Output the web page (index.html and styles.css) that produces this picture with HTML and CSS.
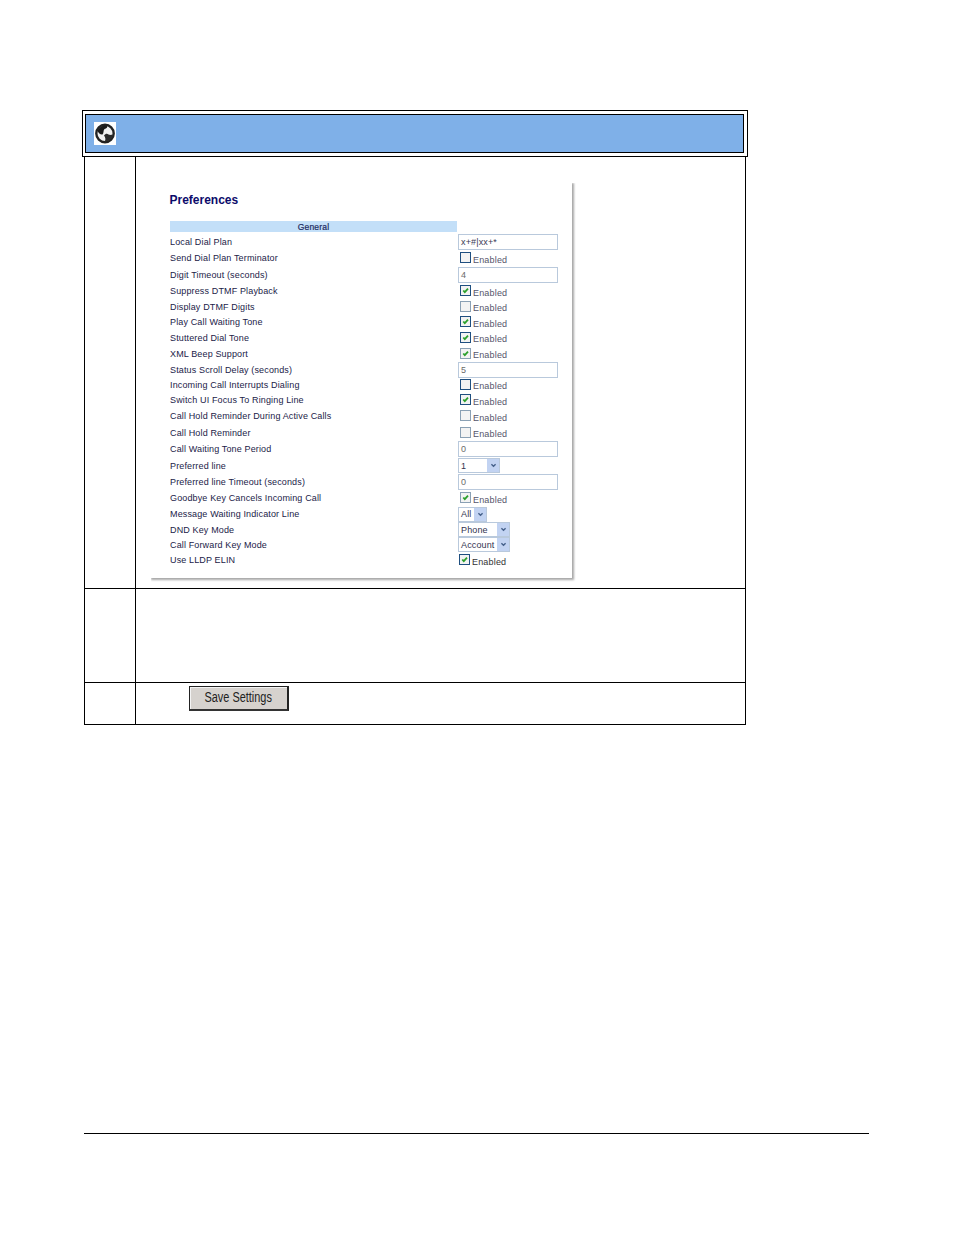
FILE: index.html
```html
<!DOCTYPE html>
<html lang="en">
<head>
<meta charset="utf-8">
<title>Preferences</title>
<link rel="stylesheet" href="styles.css">
</head>
<body>
<div class="page">
  <header class="banner">
    <div class="banner-inner">
      <svg class="globe" viewBox="0 0 22 23" aria-hidden="true">
        <rect width="22" height="23" fill="#fff"/>
        <circle cx="11" cy="11.5" r="8.7" fill="#f0f0f0" stroke="#222" stroke-width="2.4"/>
        <path d="M3.5 9 C5 5 9 3 13 3.5 C14 5 12.5 6.5 10.5 7 C9 8.5 10 11 8.5 12.5 C6.5 13 4.5 11 3.5 9 Z" fill="#1a1a1a"/>
        <path d="M10 13.5 C11.5 11.5 13 11 14.5 12.5 C16 13.5 18 12.5 19 13 C18 17 14 20 10.5 19.5 C12 18 11.5 15.5 10 13.5 Z" fill="#2a2a2a"/>
      </svg>
    </div>
  </header>

  <div class="steps">
    <div class="num r1"></div>
    <div class="body r1">
      <section class="panel">
        <h1 class="title">Preferences</h1>
        <div class="band">General</div>
        <div class="rows">
          <div class="row h17"><span>Local Dial Plan</span><div class="field dark">x+#|xx+*</div></div>
          <div class="row h16"><span>Send Dial Plan Terminator</span><label class="check"><i class="box"></i>Enabled</label></div>
          <div class="row h17"><span>Digit Timeout (seconds)</span><div class="field">4</div></div>
          <div class="row h16"><span>Suppress DTMF Playback</span><label class="check"><i class="box on"><svg viewBox="0 0 10 10"><path d="M2.5 5 L4.2 6.8 L7.8 3" /></svg></i>Enabled</label></div>
          <div class="row h15"><span>Display DTMF Digits</span><label class="check"><i class="box soft"></i>Enabled</label></div>
          <div class="row h16"><span>Play Call Waiting Tone</span><label class="check"><i class="box on"><svg viewBox="0 0 10 10"><path d="M2.5 5 L4.2 6.8 L7.8 3" /></svg></i>Enabled</label></div>
          <div class="row h15"><span>Stuttered Dial Tone</span><label class="check"><i class="box on"><svg viewBox="0 0 10 10"><path d="M2.5 5 L4.2 6.8 L7.8 3" /></svg></i>Enabled</label></div>
          <div class="row h17"><span>XML Beep Support</span><label class="check"><i class="box on soft"><svg viewBox="0 0 10 10"><path d="M2.5 5 L4.2 6.8 L7.8 3" /></svg></i>Enabled</label></div>
          <div class="row h15"><span>Status Scroll Delay (seconds)</span><div class="field">5</div></div>
          <div class="row h15"><span>Incoming Call Interrupts Dialing</span><label class="check"><i class="box"></i>Enabled</label></div>
          <div class="row h16"><span>Switch UI Focus To Ringing Line</span><label class="check"><i class="box on"><svg viewBox="0 0 10 10"><path d="M2.5 5 L4.2 6.8 L7.8 3" /></svg></i>Enabled</label></div>
          <div class="row h16"><span>Call Hold Reminder During Active Calls</span><label class="check"><i class="box soft"></i>Enabled</label></div>
          <div class="row h17"><span>Call Hold Reminder</span><label class="check"><i class="box soft"></i>Enabled</label></div>
          <div class="row h16"><span>Call Waiting Tone Period</span><div class="field">0</div></div>
          <div class="row h17"><span>Preferred line</span><div class="select w42"><b>1</b><i class="arrow"><svg viewBox="0 0 8 6"><path d="M1.5 1.5 L4 4 L6.5 1.5"/></svg></i></div></div>
          <div class="row h16"><span>Preferred line Timeout (seconds)</span><div class="field">0</div></div>
          <div class="row h16"><span>Goodbye Key Cancels Incoming Call</span><label class="check"><i class="box on soft"><svg viewBox="0 0 10 10"><path d="M2.5 5 L4.2 6.8 L7.8 3" /></svg></i>Enabled</label></div>
          <div class="row h16"><span>Message Waiting Indicator Line</span><div class="select w29"><b>All</b><i class="arrow"><svg viewBox="0 0 8 6"><path d="M1.5 1.5 L4 4 L6.5 1.5"/></svg></i></div></div>
          <div class="row h15"><span>DND Key Mode</span><div class="select w52"><b>Phone</b><i class="arrow"><svg viewBox="0 0 8 6"><path d="M1.5 1.5 L4 4 L6.5 1.5"/></svg></i></div></div>
          <div class="row h15"><span>Call Forward Key Mode</span><div class="select w52"><b>Account</b><i class="arrow"><svg viewBox="0 0 8 6"><path d="M1.5 1.5 L4 4 L6.5 1.5"/></svg></i></div></div>
          <div class="row h16"><span>Use LLDP ELIN</span><label class="check last"><i class="box on"><svg viewBox="0 0 10 10"><path d="M2.5 5 L4.2 6.8 L7.8 3" /></svg></i>Enabled</label></div>
        </div>
      </section>
    </div>
    <div class="num r2"></div>
    <div class="body r2"></div>
    <div class="num r3"></div>
    <div class="body r3"><button class="save" type="button"><span>Save Settings</span></button></div>
  </div>

  <div class="spacer"></div>
  <hr class="rule">
</div>
</body>
</html>
```

FILE: styles.css
```css
* { box-sizing: border-box; }
html, body { margin: 0; padding: 0; background: #fff; }
body { font-family: "Liberation Sans", Arial, sans-serif; }
.page { width: 954px; height: 1235px; padding: 110px 0 0 82px; display: flex; flex-direction: column; }

.banner { width: 666px; height: 47px; border: 1px solid #000; padding: 3px 3px 3px 2px; }
.banner-inner { height: 39px; background: #7fb0e8; border: 1px solid #000; padding: 7px 0 0 8px; }
.globe { display: block; width: 22px; height: 23px; }

.steps { margin-left: 2px; width: 662px; display: grid; grid-template-columns: 51px 609px; grid-template-rows: 432px 94px 41px; border-left: 1px solid #000; border-bottom: 1px solid #000; border-right: 1px solid #000; }
.num { border-right: 1px solid #000; border-bottom: 1px solid #000; }
.body { border-bottom: 1px solid #000; }
.num.r3, .body.r3 { border-bottom: 0; }

.panel { width: 421px; height: 395px; margin: 26px 0 0 15px; padding: 10px 0 0 18.5px; background: #fff; box-shadow: 1px 1px 2px 1px #a8a8a8; clip-path: inset(0 -4px -4px 0); color: #1b1b48; }
.title { margin: 0; height: 14px; line-height: 14px; font-size: 12px; font-weight: bold; color: #0b0b6a; }
.band { margin: 14px 0 0 .5px; width: 287px; height: 11px; line-height: 12px; background: #c3dff8; text-align: center; font-size: 8.5px; color: #1c2a60; -webkit-text-stroke: 0.2px #1c2a60; letter-spacing: .2px; }
.rows { display: flex; flex-direction: column; margin: 1px 0 0 .5px; }
.row { display: grid; grid-template-columns: 288px auto; align-items: center; font-size: 9px; letter-spacing: .14px; white-space: nowrap; }
.h15 { height: 15px; } .h16 { height: 16px; } .h17 { height: 17px; }

.field { width: 100px; height: 16px; line-height: 15px; border: 1px solid #b9c9dc; padding-left: 2px; color: #6a6a6a; font-size: 9px; background: #fff; }
.field.dark { color: #3a3a55; }

.check { display: flex; align-items: center; gap: 2px; padding-left: 2px; color: #55556a; font-size: 9px; padding-top: 3px; letter-spacing: .18px; }
.check.last { padding-left: 1px; color: #333; }
.box { display: block; width: 11px; height: 11px; margin-top: -4px; border: 1px solid #1f4f80; background: #f3f3f3; }
.box.soft { border-color: #8aa0b4; }
.box svg { display: block; width: 9px; height: 9px; }
.box path { fill: none; stroke: #2ca02c; stroke-width: 2; }

.select { height: 15px; display: flex; justify-content: space-between; align-items: center; border: 1px solid #b9c9dc; padding: 0 0 0 2px; background: #fff; font-size: 9px; }
.select b { font-weight: normal; color: #333350; }
.w42 { width: 42px; } .w29 { width: 29px; } .w52 { width: 52px; }
.arrow { display: flex; align-items: center; justify-content: center; width: 12px; height: 13px; background: #c2d3f2; }
.arrow svg { display: block; width: 7px; height: 5px; }
.arrow path { fill: none; stroke: #45608a; stroke-width: 1.6; }

.save { display: block; margin: 3px 0 0 53px; width: 100px; height: 25px; padding: 0 0 3px; background: #d6d2ce; border: 1px solid #222; border-right: 2px solid #222; border-bottom: 2px solid #333; box-shadow: inset 1px 1px 0 #f4f4f4; font-family: "Liberation Sans", Arial, sans-serif; font-size: 14px; color: #222; }
.save span { display: inline-block; transform: scaleX(.78); }

.spacer { height: 408px; flex: none; }
.rule { margin: 0 0 0 2px; width: 785px; height: 1px; border: 0; background: #000; }
```
